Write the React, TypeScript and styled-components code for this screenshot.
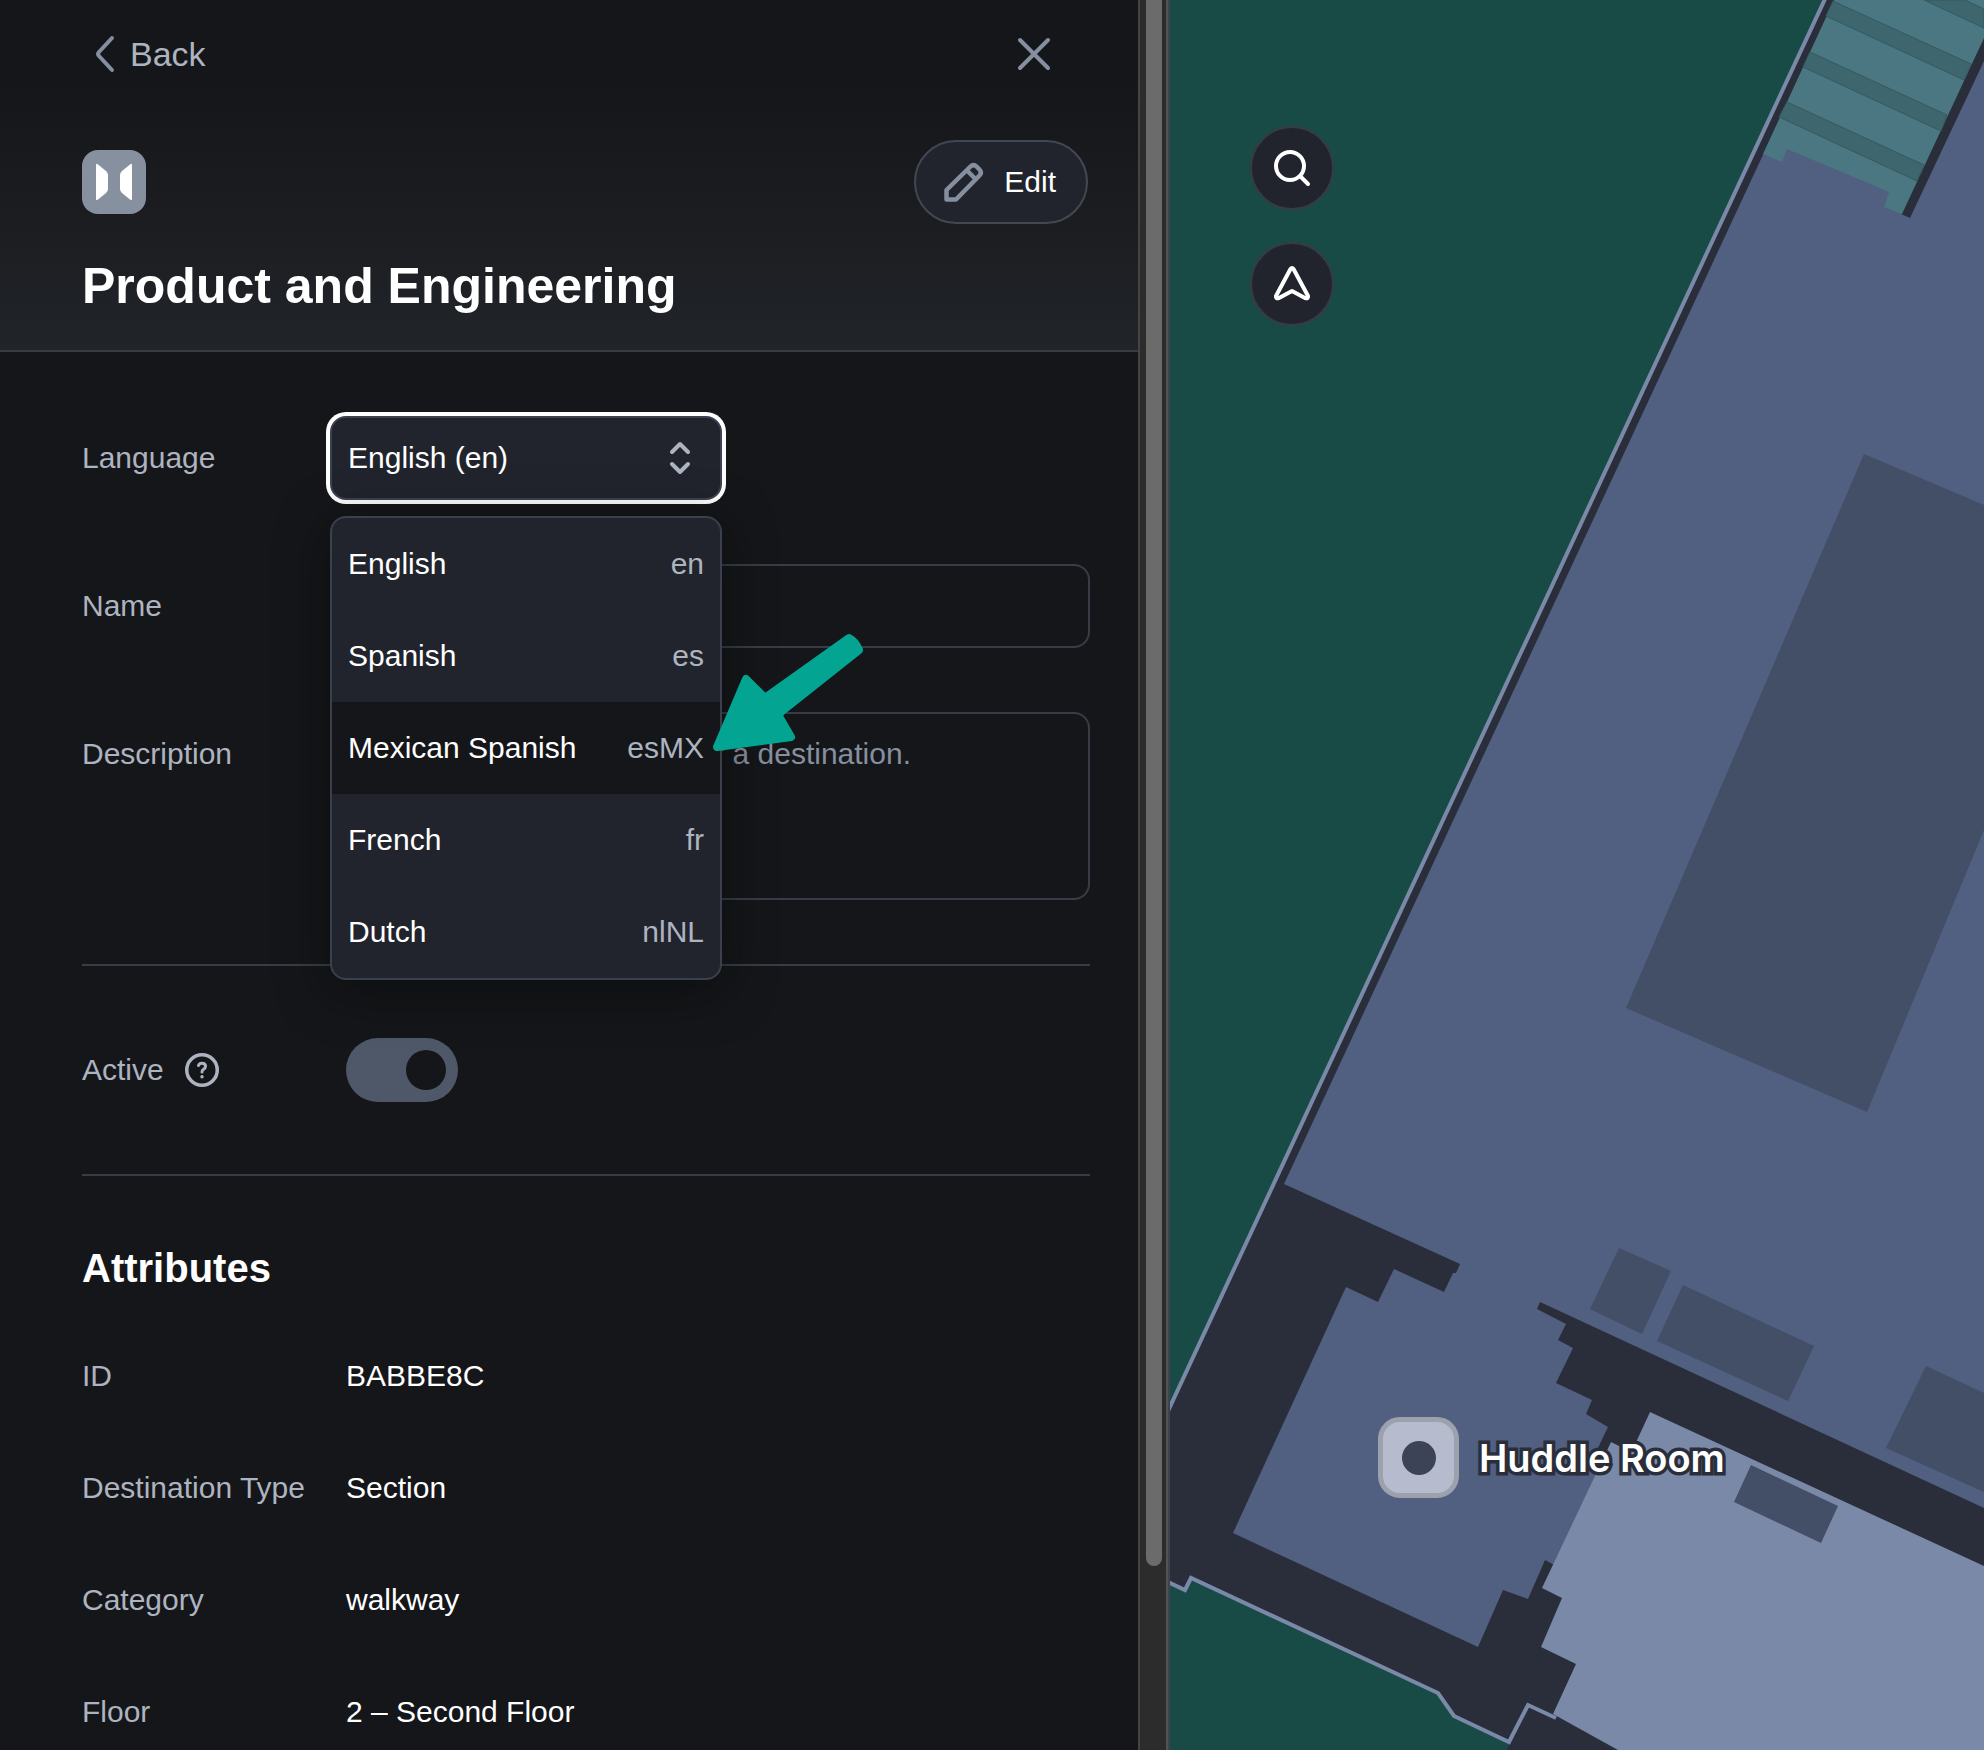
import React, { useState } from "react";
import styled, { createGlobalStyle } from "styled-components";

const color = {
  ink: "#151619",
  raised: "#21242c",
  line: "#373d47",
  muted: "#adb4c0",
  icon: "#868f9f",
  white: "#ffffff",
  green: "#184a46",
  wall: "#292e3a",
  floor: "#515f81",
  room: "#7b89a9",
  furniture: "#434e67",
  stairs: "#4a7781",
  tread: "#3e666e",
  pointer: "#03a592",
};

const GlobalStyle = createGlobalStyle`
  *, *::before, *::after { box-sizing: border-box; }
  body {
    margin: 0;
    background: ${color.ink};
    color: ${color.white};
    font-family: "Liberation Sans", Arial, sans-serif;
    font-size: 30px;
    line-height: 36px;
  }
  button, input, select, textarea { font: inherit; color: inherit; margin: 0; }
  h1, h2, dl, dd, dt, ul { margin: 0; padding: 0; }
  svg { display: block; }
`;

const Page = styled.div`
  display: flex;
  height: 100vh;
  overflow: hidden;
`;

const Panel = styled.aside`
  flex: 0 1 1138px;
  min-width: 0;
  overflow: hidden;
  background: ${color.ink};
`;

const Header = styled.header`
  padding: 0 50px 32px 82px;
  border-bottom: 2px solid ${color.line};
  background: linear-gradient(${color.ink} 80px, #1a1c1f 200px, #212429 100%);
`;

const TopBar = styled.div`
  display: flex;
  justify-content: space-between;
  align-items: center;
  height: 108px;
  margin-bottom: 32px;
  padding: 0 30px 0 12px;
`;

const PlainButton = styled.button`
  display: flex;
  align-items: center;
  justify-content: center;
  gap: 14px;
  min-width: 48px;
  height: 48px;
  padding: 0;
  border: 0;
  background: none;
  color: ${color.muted};
  font-size: 34px;
`;

const TitleRow = styled.div`
  display: flex;
  justify-content: space-between;
  align-items: center;
  margin-bottom: 30px;
`;

const Badge = styled.div`
  width: 64px;
  height: 64px;
  border-radius: 16px;
  background: #87909f;
`;

const EditButton = styled.button`
  display: flex;
  align-items: center;
  gap: 20px;
  height: 84px;
  padding: 0 30px 0 28px;
  border: 2px solid #414854;
  border-radius: 42px;
  background: ${color.raised};
`;

const Title = styled.h1`
  font-size: 50px;
  line-height: 64px;
  font-weight: 700;
`;

const Body = styled.div`
  padding: 64px 48px 0 82px;
`;

const Form = styled.form`
  display: flex;
  flex-direction: column;
  gap: 64px;
`;

const Field = styled.div`
  display: grid;
  grid-template-columns: 264px minmax(0, 1fr);
  align-items: start;
`;

const Label = styled.label`
  line-height: 84px;
  color: ${color.muted};
`;

const SelectWrap = styled.div`
  position: relative;
  width: 392px;
  margin-left: -16px;
`;

const Select = styled.select`
  display: block;
  appearance: none;
  width: 100%;
  height: 84px;
  padding: 0 48px 0 16px;
  border: 2px solid #3b4350;
  border-radius: 16px;
  outline: 0;
  box-shadow: 0 0 0 4px ${color.white};
  background: ${color.raised};
`;

const SelectIcon = styled.svg`
  position: absolute;
  top: 24px;
  right: 28px;
  pointer-events: none;
`;

const Menu = styled.ul`
  position: absolute;
  z-index: 2;
  top: 100px;
  left: 0;
  width: 100%;
  overflow: hidden;
  list-style: none;
  border: 2px solid #3a414c;
  border-radius: 16px;
  background: ${color.raised};
  box-shadow: 0 10px 50px rgba(0, 8, 8, 0.5);
`;

const MenuItem = styled.li<{ $active: boolean }>`
  display: flex;
  justify-content: space-between;
  align-items: center;
  height: 92px;
  padding: 0 16px;
  background: ${(p) => (p.$active ? color.ink : "transparent")};
`;

const Code = styled.span`
  color: ${color.muted};
`;

const Pointer = styled.svg`
  position: absolute;
  z-index: 3;
  top: 214px;
  left: 380px;
  pointer-events: none;
`;

const TextInput = styled.input`
  width: 100%;
  height: 84px;
  padding: 0 16px;
  border: 2px solid ${color.line};
  border-radius: 16px;
  background: transparent;
`;

const TextArea = styled.textarea`
  display: block;
  width: 100%;
  height: 188px;
  padding: 22px 16px;
  border: 2px solid ${color.line};
  border-radius: 16px;
  background: transparent;
  resize: none;
  overflow: hidden;
  &::placeholder { color: ${color.icon}; opacity: 1; }
`;

const ToggleRow = styled.div`
  display: grid;
  grid-template-columns: 264px minmax(0, 1fr);
  align-items: center;
  margin-top: 64px;
  padding: 72px 0;
  border: 2px solid ${color.line};
  border-width: 2px 0;
`;

const LabelGroup = styled.div`
  display: flex;
  align-items: center;
  gap: 18px;
  height: 64px;
`;

const HelpButton = styled.button`
  padding: 0;
  border: 0;
  background: none;
  color: ${color.muted};
`;

const Toggle = styled.input`
  appearance: none;
  display: flex;
  align-items: center;
  justify-content: flex-end;
  width: 112px;
  height: 64px;
  padding: 0 12px;
  border-radius: 32px;
  background: #4f5868;
  &::before {
    content: "";
    width: 40px;
    height: 40px;
    border-radius: 50%;
    background: ${color.ink};
  }
  &:not(:checked) { justify-content: flex-start; }
`;

const SectionTitle = styled.h2`
  margin: 68px 0 28px;
  font-size: 40px;
  line-height: 48px;
  font-weight: 700;
`;

const Attribute = styled.div`
  display: grid;
  grid-template-columns: 264px minmax(0, 1fr);
  line-height: 112px;
  dt { color: ${color.muted}; white-space: nowrap; }
`;

const Gutter = styled.div`
  flex: 0 0 32px;
  padding: 0 4px 0 6px;
  border-left: 2px solid #444445;
  border-right: 2px solid #3f4350;
  background: #2c2c2c;
  box-shadow: inset -2px 0 0 #535355;
`;

const Thumb = styled.div`
  width: 16px;
  height: 89.5%;
  border-radius: 0 0 8px 8px;
  background: #6b6b6b;
`;

const MapArea = styled.main`
  position: relative;
  flex: 1;
  min-width: 0;
  overflow: hidden;
  background: ${color.green};
`;

const MapControls = styled.div`
  position: absolute;
  top: 126px;
  left: 80px;
  display: flex;
  flex-direction: column;
  gap: 32px;
`;

const RoundButton = styled.button`
  display: flex;
  align-items: center;
  justify-content: center;
  width: 84px;
  height: 84px;
  padding: 0;
  border: 2px solid #373b46;
  border-radius: 50%;
  background: ${color.raised};
`;

const Marker = styled.div`
  position: absolute;
  top: 1417px;
  left: 208px;
  display: flex;
  align-items: center;
  gap: 20px;
`;

const MarkerIcon = styled.div`
  display: flex;
  align-items: center;
  justify-content: center;
  width: 81px;
  height: 81px;
  border: 5px solid #9ba1ad;
  border-radius: 22px;
  background: #b6bccd;
  &::before {
    content: "";
    width: 34px;
    height: 34px;
    border-radius: 50%;
    background: #3d4357;
  }
`;

const MarkerText = styled.span`
  font-family: Inter, "Liberation Sans", sans-serif;
  font-size: 38px;
  line-height: 44px;
  font-weight: 600;
  white-space: nowrap;
  -webkit-text-stroke: 7px ${color.wall};
  paint-order: stroke fill;
`;

const languages = [
  { name: "English", code: "en" },
  { name: "Spanish", code: "es" },
  { name: "Mexican Spanish", code: "esMX" },
  { name: "French", code: "fr" },
  { name: "Dutch", code: "nlNL" },
];

const attributes = [
  ["ID", "BABBE8C"],
  ["Destination Type", "Section"],
  ["Category", "walkway"],
  ["Floor", "2 – Second Floor"],
];

function FloorPlan() {
  return (
    <svg width="100%" height="100%" aria-hidden="true">
      <g transform="translate(-1170 0)">
        <path fill={color.wall} d="M1825 0H2600V1750H1507L1510 1742L1454 1716L1438 1693L1191 1578L1185 1591L1170 1584V1408Z" />
        <path fill={color.floor} d="M1835 0L1284 1184L1460 1264L1456 1273H1453L1444 1292L1394 1269L1378 1302L1346 1287L1233 1533L1478 1647L1503 1590L1528 1599L1545 1560L1556 1566L1612 1450H1597L1608 1427L1586 1414L1592 1400L1556 1383L1573 1348L1558 1340L1566 1324L1537 1309L1540 1302L1984 1508H2600V0Z" />
        <path fill={color.room} d="M1650 1412L1984 1566H2600V1750H1618L1553 1714L1576 1664L1541 1647L1562 1598L1542 1588L1611 1442L1627 1450L1632 1451Z" />
        <g fill={color.furniture}>
          <path d="M1864 454L1984 505L2120 562L1984 830L1867 1112L1626 1008Z" />
          <path d="M1619 1248L1671 1271L1642 1334L1590 1309Z" />
          <path d="M1683 1285L1814 1346L1788 1401L1657 1341Z" />
          <path d="M1926 1366L1984 1393V1492L1886 1448Z" />
          <path d="M1751 1465L1838 1506L1821 1543L1734 1502Z" />
        </g>
        <path fill={color.wall} d="M1984 37V61L1910 218L1901 214Z" />
        <path fill={color.stairs} d="M1834 0H1984V38L1902 214L1884 207L1889 192L1787 149L1782 162L1763 154Z" />
        <g fill={color.tread} stroke="#35595f" strokeWidth="1">
          <path d="M1787 102L1924 165L1917 181L1779 117Z" />
          <path d="M1810 52L1947 115L1941 131L1803 67Z" />
          <path d="M1833 1L1971 64L1964 80L1826 16Z" />
          <path d="M1924 0L1984 28V9L1965 0Z" />
        </g>
        <path fill="none" stroke={color.room} strokeWidth="4" d="M1825 -1L1168 1411" />
        <path fill="none" stroke={color.room} strokeWidth="4" d="M1168 1582L1185 1590L1191 1578L1438 1693L1454 1716L1509 1742L1528 1705L1556 1718" />
      </g>
    </svg>
  );
}

export default function App() {
  const [language, setLanguage] = useState("en");
  const [active, setActive] = useState(true);

  return (
    <>
      <GlobalStyle />
      <Page>
        <Panel>
          <Header>
            <TopBar>
              <PlainButton type="button">
                <svg width="22" height="40" viewBox="0 0 22 40" fill="none" stroke={color.icon} strokeWidth="4" strokeLinecap="round" strokeLinejoin="round">
                  <path d="M18 4L5 18Q3 20 5 22L18 36" />
                </svg>
                Back
              </PlainButton>
              <PlainButton type="button" aria-label="Close">
                <svg width="36" height="36" viewBox="0 0 36 36" fill="none" stroke={color.icon} strokeWidth="4" strokeLinecap="round">
                  <path d="M4 4L32 32M32 4L4 32" />
                </svg>
              </PlainButton>
            </TopBar>
            <TitleRow>
              <Badge>
                <svg width="64" height="64" viewBox="0 0 64 64" fill={color.white} aria-hidden="true">
                  <path d="M14 15Q14 13 16 14.500L24 21Q26 23 26 25V39Q26 41 24 43L16 49.500Q14 51 14 49Z" />
                  <path d="M50 15Q50 13 48 14.500L40 21Q38 23 38 25V39Q38 41 40 43L48 49.500Q50 51 50 49Z" />
                </svg>
              </Badge>
              <EditButton type="button">
                <svg width="40" height="40" viewBox="0 0 40 40" fill="none" stroke={color.icon} strokeWidth="4.500" strokeLinejoin="round">
                  <path d="M2.500 37.500V28L26.500 4.500Q29.500 1.500 32.500 4.500L35.500 7.500Q38.500 10.500 35.500 13.500L12 37.500ZM23 8.500L31.500 17" />
                </svg>
                Edit
              </EditButton>
            </TitleRow>
            <Title>Product and Engineering</Title>
          </Header>

          <Body>
            <Form onSubmit={(e) => e.preventDefault()}>
              <Field>
                <Label htmlFor="language">Language</Label>
                <SelectWrap>
                  <Select id="language" value={language} onChange={(e) => setLanguage(e.target.value)}>
                    {languages.map((l) => (
                      <option key={l.code} value={l.code}>{`${l.name} (${l.code})`}</option>
                    ))}
                  </Select>
                  <SelectIcon width="28" height="36" viewBox="0 0 28 36" fill="none" stroke={color.muted} strokeWidth="4" strokeLinecap="round" strokeLinejoin="round">
                    <path d="M6 12L14 4L22 12M6 24L14 32L22 24" />
                  </SelectIcon>
                  <Menu role="listbox" aria-label="Language">
                    {languages.map((l) => (
                      <MenuItem key={l.code} role="option" aria-selected={l.code === language} $active={l.code === "esMX"} onClick={() => setLanguage(l.code)}>
                        <span>{l.name}</span>
                        <Code>{l.code}</Code>
                      </MenuItem>
                    ))}
                  </Menu>
                  <Pointer width="160" height="126" viewBox="0 0 160 126" fill={color.pointer} stroke={color.pointer} strokeWidth="8" strokeLinejoin="round" aria-hidden="true">
                    <path d="M7 117L36 49L52 65Q55 68 59 65L139 8Q146 12 149 20L72 81Q68 84 70 88L81 107Z" />
                  </Pointer>
                </SelectWrap>
              </Field>
              <Field>
                <Label htmlFor="name">Name</Label>
                <TextInput id="name" type="text" />
              </Field>
              <Field>
                <Label htmlFor="description">Description</Label>
                <TextArea id="description" placeholder="Enter a brief description for a destination." />
              </Field>
            </Form>

            <ToggleRow>
              <LabelGroup>
                <Label htmlFor="active">Active</Label>
                <HelpButton type="button" aria-label="About active">
                  <svg width="40" height="40" viewBox="0 0 40 40" fill="none" stroke="currentColor" strokeWidth="3.500" strokeLinecap="round">
                    <circle cx="20" cy="20" r="15.250" />
                    <path strokeWidth="3" d="M16.500 15.500Q17.200 13.200 20 13.200Q23.500 13.200 23.500 16.300Q23.500 18.300 21.500 19.300Q20 20.200 20 22" />
                    <circle cx="20" cy="26.800" r="1.700" fill="currentColor" stroke="none" />
                  </svg>
                </HelpButton>
              </LabelGroup>
              <Toggle id="active" type="checkbox" role="switch" checked={active} onChange={(e) => setActive(e.target.checked)} />
            </ToggleRow>

            <SectionTitle>Attributes</SectionTitle>
            <dl>
              {attributes.map(([name, value]) => (
                <Attribute key={name}>
                  <dt>{name}</dt>
                  <dd>{value}</dd>
                </Attribute>
              ))}
            </dl>
          </Body>
        </Panel>

        <Gutter>
          <Thumb />
        </Gutter>

        <MapArea>
          <FloorPlan />
          <MapControls>
            <RoundButton type="button" aria-label="Search">
              <svg width="44" height="44" viewBox="0 0 44 44" fill="none" stroke={color.white} strokeWidth="4" strokeLinecap="round">
                <circle cx="20" cy="20" r="14" />
                <path d="M30.500 30.500L38 38" />
              </svg>
            </RoundButton>
            <RoundButton type="button" aria-label="Reset orientation">
              <svg width="44" height="44" viewBox="0 0 44 44" fill="none" stroke={color.white} strokeWidth="4" strokeLinecap="round" strokeLinejoin="round">
                <path d="M20.500 7Q22 5 23.500 7L38 34Q38.500 37 35 36L22 29L9 36Q5.500 37 6 34Z" />
              </svg>
            </RoundButton>
          </MapControls>
          <Marker>
            <MarkerIcon />
            <MarkerText>Huddle Room</MarkerText>
          </Marker>
        </MapArea>
      </Page>
    </>
  );
}
